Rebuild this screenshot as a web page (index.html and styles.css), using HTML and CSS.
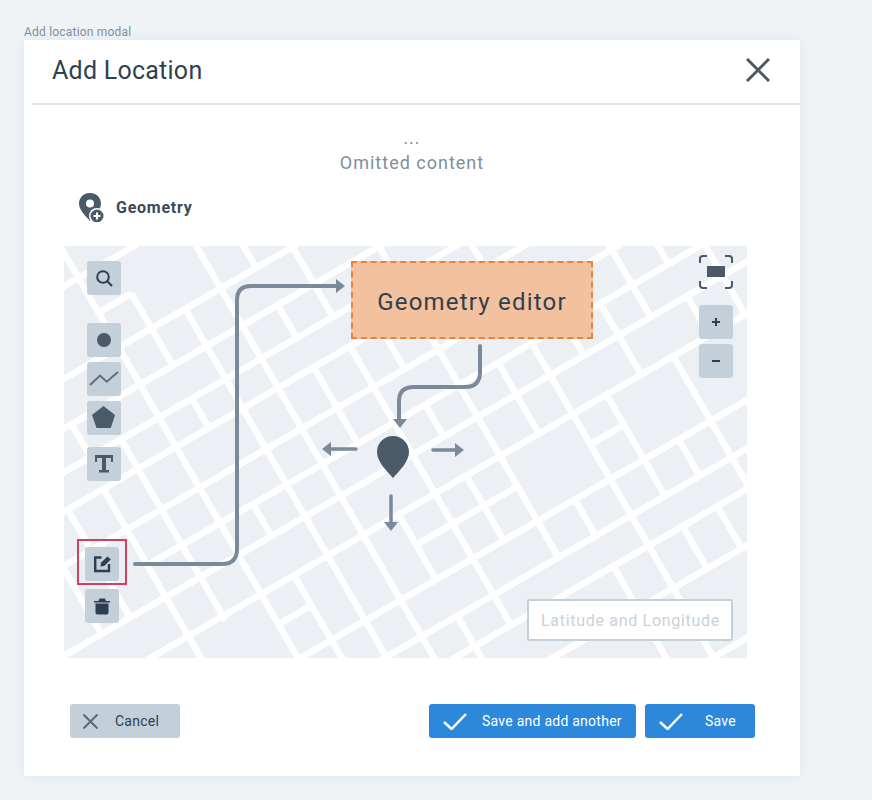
FILE: index.html
```html
<!DOCTYPE html>
<html lang="en">
<head>
    <meta charset="UTF-8">
    <meta name="viewport" content="width=device-width, initial-scale=1.0">
    <title>Add location modal</title>
    <link rel="stylesheet" href="styles.css">
</head>
<body>
    <p class="caption">Add location modal</p>
    <main class="modal">
        <header class="modal-head">
            <h1>Add Location</h1>
            <button class="close" type="button" aria-label="Close">
                <svg width="24" height="24" viewBox="0 0 24 24"><path d="M1 1L23 23M23 1L1 23"/></svg>
            </button>
        </header>

        <div class="omitted">
            <p>...</p>
            <p>Omitted content</p>
        </div>

        <div class="section-title">
            <svg width="28" height="30" viewBox="0 0 28 30">
                <path class="pin" fill-rule="evenodd" d="M12 1C5.500 1 1 5.700 1 11.500C1 18 7.500 24 12 29C16.500 24 23 18 23 11.500C23 5.700 18.500 1 12 1ZM12 7.500A4 4 0 1 1 12 15.500A4 4 0 1 1 12 7.500Z"/>
                <circle cx="19" cy="24" r="8" fill="#fff"/>
                <circle class="pin" cx="19" cy="24" r="6.500"/>
                <path d="M15.500 24H22.500M19 20.500V27.500" stroke="#fff" stroke-width="2"/>
            </svg>
            <h2>Geometry</h2>
        </div>

        <section class="map">
            <svg class="streets" width="683" height="412" viewBox="64 246 683 412">
                <g transform="rotate(-30)" class="roads">
                    <!-- long streets -->
                    <path d="M-300 280H200M-300 360H560M-300 403H560M-300 441H560M-300 475H560M-300 522H560M-155 563H560M-300 600H560M-300 645H560M-71 320H-33M-71 680H-33M88 680H205M289 680H328M-300 720H560M-300 762H560M-300 797H560M130 846H560M200 926H560"/>
                    <!-- cross streets -->
                    <path d="M-71 240V950M-33 320V403M-33 441V475M-33 563V600M-33 645V950M6 360V950M47 240V950"/>
                    <path d="M88 240V360M88 403V441M88 475V563M88 645V720M88 762V950M130 360V441M130 475V797"/>
                    <path d="M166 475V522M166 563V600M166 645V720M205 390V762M250 563V645M248 720V762M248 797V950M286 441V475M289 563V950"/>
                    <path d="M328 563V600M328 645V762M328 797V846M368 563V645M368 720V762M368 797V846M405 240V600M405 645V797M447 240V563M447 600V645M488 240V645"/>
                    <path d="M-115 441V650M-150 403V441M-155 475V950M-196 475V600M-229 522V600"/>
                </g>
                <g class="arrows">
                    <path d="M135 564H222Q237 564 237 549V300Q237 286 251 286H337"/>
                    <path d="M480 346V372Q480 387 465 387H414Q399 387 399 401V420"/>
                    <path class="thin" d="M356 449H330M433 450H456M391 496V523"/>
                </g>
                <g class="heads">
                    <path d="M336 279L345 286L336 293Z"/>
                    <path d="M393 419H407L400 428Z"/>
                    <path d="M331 442V456L322 449Z"/>
                    <path d="M455 443L464 450L455 457Z"/>
                    <path d="M384 522H398L391 531Z"/>
                </g>
                <path class="pin" d="M393 436C384 436 377 443 377 452C377 462 387 471 393 478C399 471 409 462 409 452C409 443 402 436 393 436Z"/>
            </svg>

            <div class="tools">
                <button class="tool search" type="button" aria-label="Search">
                    <svg width="34" height="34" viewBox="0 0 34 34"><circle cx="16" cy="16" r="5.800"/><path d="M20.500 20.500L25 25"/></svg>
                </button>
                <button class="tool point" type="button" aria-label="Point">
                    <svg width="34" height="34" viewBox="0 0 34 34"><circle class="solid" cx="17" cy="17" r="7"/></svg>
                </button>
                <button class="tool" type="button" aria-label="Line">
                    <svg width="34" height="34" viewBox="0 0 34 34"><path class="soft" d="M3 23L13 13.500L19.700 19.700L31 10"/></svg>
                </button>
                <button class="tool" type="button" aria-label="Polygon">
                    <svg width="34" height="34" viewBox="0 0 34 34"><path class="solid" d="M16.500 5L28 14L23.800 27H9.500L5 14Z"/></svg>
                </button>
                <button class="tool text-tool" type="button" aria-label="Text">
                    <svg width="34" height="34" viewBox="0 0 34 34"><path class="solid" d="M8 8H26V15H24V11H19V23H22V25.500H12V23H15V11H10V15H8Z"/></svg>
                </button>
            </div>

            <div class="edit-tools">
                <div class="highlight">
                    <button class="tool" type="button" aria-label="Edit">
                        <svg width="34" height="34" viewBox="0 0 34 34"><path class="frame" d="M16.500 10.500H10.200V24H24V17"/><path class="dark" d="M15.500 19.500L16 15.800L22.500 9.500L25.800 12.500L19.200 19Z"/></svg>
                    </button>
                </div>
                <button class="tool" type="button" aria-label="Delete">
                    <svg width="34" height="34" viewBox="0 0 34 34"><path class="dark" d="M13.500 12L14.500 9.500H20L21 12H25V13.500H9V12ZM10.500 14.500H23.500V23.500Q23.500 25.500 21.500 25.500H12.500Q10.500 25.500 10.500 23.500Z"/></svg>
                </button>
            </div>

            <div class="view-tools">
                <button class="fit" type="button" aria-label="Fit to view">
                    <svg width="34" height="34" viewBox="0 0 34 34"><path d="M8 1H4Q1 1 1 4V8M26 1H30Q33 1 33 4V8M8 33H4Q1 33 1 30V26M26 33H30Q33 33 33 30V26"/><rect class="solid" x="8" y="11" width="18" height="11"/></svg>
                </button>
                <button class="tool zoom-in" type="button" aria-label="Zoom in">
                    <svg width="34" height="34" viewBox="0 0 34 34"><path d="M13 17H21M17 13V21"/></svg>
                </button>
                <button class="tool" type="button" aria-label="Zoom out">
                    <svg width="34" height="34" viewBox="0 0 34 34"><path d="M13 17H21"/></svg>
                </button>
            </div>

            <div class="editor-note">Geometry editor</div>
            <input class="coords" type="text" placeholder="Latitude and Longitude">
        </section>

        <footer class="actions">
            <button class="btn btn-cancel" type="button">
                <svg width="15" height="15" viewBox="0 0 15 15"><path d="M.5 .5L14.500 14.500M14.500 .5L.5 14.500"/></svg>
                <span>Cancel</span>
            </button>
            <div class="actions-right">
                <button class="btn btn-primary wide" type="button">
                    <svg width="24" height="17" viewBox="0 0 24 17"><path d="M1 9L8.500 16L23 1"/></svg>
                    <span>Save and add another</span>
                </button>
                <button class="btn btn-primary" type="button">
                    <svg width="24" height="17" viewBox="0 0 24 17"><path d="M1 9L8.500 16L23 1"/></svg>
                    <span>Save</span>
                </button>
            </div>
        </footer>
    </main>
</body>
</html>
```

FILE: styles.css
```css
* {
    margin: 0;
    padding: 0;
    box-sizing: border-box;
    font-family: Roboto, "Liberation Sans", sans-serif;
}

body {
    background-color: #eff3f6;
    padding: 24px 0 0 24px;
    height: 800px;
    overflow: hidden;
}

button {
    border: 0;
    display: block;
}

svg {
    display: block;
}

.caption {
    color: #7f8e9c;
    font-size: 12px;
    line-height: 16px;
    letter-spacing: 0.2px;
}

.modal {
    width: 776px;
    height: 736px;
    background-color: #fff;
    box-shadow: 0 0 10px rgba(60, 80, 100, 0.08);
}

.modal-head {
    display: flex;
    align-items: center;
    justify-content: space-between;
    height: 65px;
    margin-left: 8px;
    padding: 0 30px 3px 20px;
    border-bottom: 2px solid #e1e6ee;
}

.modal-head h1 {
    color: #2f3f4f;
    font-size: 25px;
    font-weight: 400;
    letter-spacing: 0.25px;
}

.close {
    background: none;
}

.close path {
    fill: none;
    stroke: #4a5a69;
    stroke-width: 3;
}

.omitted {
    margin-top: 20px;
    height: 46px;
    text-align: center;
    color: #7f8e9c;
    font-size: 18px;
    line-height: 25px;
    letter-spacing: 1px;
}

.section-title {
    display: flex;
    align-items: center;
    gap: 10px;
    margin: 16px 0 0 54px;
    height: 40px;
}

.section-title h2 {
    color: #3b4a59;
    font-size: 16px;
    font-weight: 700;
    letter-spacing: 0.75px;
}

.pin {
    fill: #4a5a69;
}

.map {
    position: relative;
    width: 683px;
    height: 412px;
    margin: 19px 0 0 40px;
    background-color: #eceff4;
    overflow: hidden;
}

.streets {
    position: absolute;
    top: 0;
    left: 0;
}

.roads path {
    fill: none;
    stroke: #fff;
    stroke-width: 6.5;
}

.arrows path {
    fill: none;
    stroke: #7a8a9a;
    stroke-width: 4;
    stroke-linecap: round;
}

.arrows .thin {
    stroke-width: 3.5;
}

.heads path {
    fill: #7a8a9a;
}

.tool {
    width: 34px;
    height: 34px;
    background-color: #c3cfd9;
    border-radius: 3px;
}

.tool path,
.tool circle,
.fit path {
    fill: none;
    stroke: #2c3e50;
    stroke-width: 2;
}

.tool .solid,
.fit .solid {
    fill: #4a5a69;
    stroke: none;
}

.tool .soft {
    stroke: #5f6f7e;
}

.tool .dark {
    fill: #2c3e50;
    stroke: none;
}

.tool .frame {
    stroke-width: 2.4;
}

.fit {
    background: none;
}

.fit path {
    stroke: #4a5a69;
}

.tools {
    position: absolute;
    top: 15px;
    left: 23px;
    display: flex;
    flex-direction: column;
    gap: 5px;
}

.tools .point {
    margin-top: 23px;
}

.tools .text-tool {
    margin-top: 7px;
}

.edit-tools {
    position: absolute;
    top: 293px;
    left: 13px;
    display: flex;
    flex-direction: column;
    align-items: flex-start;
    gap: 4px;
}

.highlight {
    padding: 6px 6px 2px;
    border: 2px solid #d0405f;
    width: 50px;
}

.edit-tools > .tool {
    margin-left: 8px;
}

.view-tools {
    position: absolute;
    top: 9px;
    right: 14px;
    display: flex;
    flex-direction: column;
    gap: 5px;
}

.view-tools .fit {
    margin-bottom: 11px;
}

.editor-note {
    position: absolute;
    top: 15px;
    left: 287px;
    width: 242px;
    height: 78px;
    padding-top: 4px;
    display: flex;
    align-items: center;
    justify-content: center;
    background-color: #f3c19d;
    border: 2px dashed #e8833a;
    color: #2f3f4f;
    font-size: 24px;
    letter-spacing: 1.2px;
}

.coords {
    position: absolute;
    top: 353px;
    left: 463px;
    width: 206px;
    height: 42px;
    padding: 0 12px;
    border: 2px solid #c3cfd9;
    border-radius: 3px;
    background-color: #fff;
    font-size: 16px;
    letter-spacing: 0.7px;
}

.coords::placeholder {
    color: #c8d2dc;
    opacity: 1;
}

.actions {
    display: flex;
    justify-content: space-between;
    margin: 46px 0 0 46px;
    padding-right: 45px;
}

.actions-right {
    display: flex;
    gap: 9px;
}

.btn {
    display: flex;
    align-items: center;
    width: 110px;
    height: 34px;
    border-radius: 3px;
    font-size: 14px;
    letter-spacing: 0.25px;
}

.btn span {
    font: inherit;
    letter-spacing: inherit;
}

.btn path {
    fill: none;
    stroke-width: 2.5;
}

.btn-cancel {
    background-color: #c3cfd9;
    color: #2f3f4f;
    padding-left: 13px;
    gap: 17px;
}

.btn-cancel path {
    stroke: #5b6b7a;
    stroke-width: 2;
}

.btn-primary {
    background-color: #2d88dc;
    color: #fff;
    padding-left: 14px;
    gap: 22px;
}

.btn-primary path {
    stroke: #fff;
}

.btn-primary.wide {
    width: 207px;
    gap: 15px;
}
```
